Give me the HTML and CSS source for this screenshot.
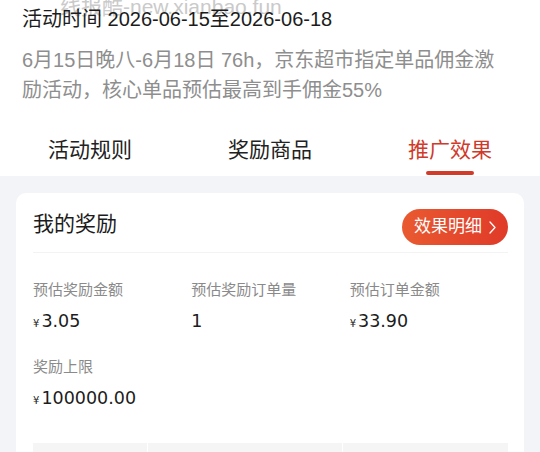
FILE: index.html
```html
<!DOCTYPE html>
<html lang="zh-CN">
<head>
<meta charset="utf-8">
<title>推广效果</title>
<link rel="stylesheet" href="styles.css">
</head>
<body>
<div class="top">
  <div class="watermark">线报酷-new.xianbao.fun</div>
  <div class="intro">
    <h1 class="title">活动时间 2026-06-15至2026-06-18</h1>
    <p class="desc">6月15日晚八-6月18日 76h，京东超市指定单品佣金激励活动，核心单品预估最高到手佣金55%</p>
  </div>
  <nav class="tabs">
    <div class="tab">活动规则</div>
    <div class="tab">奖励商品</div>
    <div class="tab active">推广效果</div>
  </nav>
</div>
<main class="content">
  <section class="card">
    <div class="card-head">
      <h2 class="card-title">我的奖励</h2>
      <button class="detail-btn">效果明细<svg class="chev" width="7" height="13" viewBox="0 0 7 13"><path d="M1 1l5 5.5L1 12" fill="none" stroke="#fff" stroke-width="1.3" stroke-linecap="round" stroke-linejoin="round"/></svg></button>
    </div>
    <div class="stats">
      <div class="stat">
        <div class="label">预估奖励金额</div>
        <div class="value"><span class="yen">¥</span>3.05</div>
      </div>
      <div class="stat">
        <div class="label">预估奖励订单量</div>
        <div class="value">1</div>
      </div>
      <div class="stat">
        <div class="label">预估订单金额</div>
        <div class="value"><span class="yen">¥</span>33.90</div>
      </div>
      <div class="stat">
        <div class="label">奖励上限</div>
        <div class="value"><span class="yen">¥</span>100000.00</div>
      </div>
    </div>
    <div class="table-head">
      <div class="th"></div>
      <div class="th"></div>
      <div class="th"></div>
    </div>
  </section>
</main>
</body>
</html>
```
FILE: styles.css
```css
* { box-sizing: border-box; }
html, body {
  margin: 0;
  padding: 0;
}
body {
  font-family: "Liberation Sans", "Noto Sans CJK SC", sans-serif;
  background: #f3f4f7;
  color: #1c1c1c;
  overflow: hidden;
}
.top {
  position: relative;
  background: #fff;
  padding-bottom: 1px;
}
.watermark {
  position: absolute;
  top: -4px;
  left: 60px;
  font-size: 21px;
  line-height: 21px;
  color: #cacaca;
  white-space: nowrap;
  z-index: 0;
}
.intro {
  position: relative;
  z-index: 1;
  padding: 5px 22px 0;
}
.title {
  margin: 0;
  font-size: 20px;
  line-height: 28px;
  font-weight: 400;
  color: #1c1c1c;
}
.desc {
  margin: 12px 0 0;
  max-width: 480px;
  font-size: 20px;
  line-height: 30px;
  color: #8e8e8e;
}
.tabs {
  display: grid;
  grid-template-columns: repeat(3, 1fr);
  margin-top: 30px;
}
.tab {
  display: flex;
  flex-direction: column;
  align-items: center;
  font-size: 21px;
  line-height: 30px;
  color: #222;
}
.tab::after {
  content: "";
  display: block;
  width: 48px;
  height: 4px;
  margin-top: 6px;
  border-radius: 2px;
  background: transparent;
}
.tab.active { color: #cf3a2a; }
.tab.active::after { background: #d23b2a; }
.content {
  padding: 17px 16px 0;
}
.card {
  background: #fff;
  border-radius: 10px;
  padding: 16px 16px 0 17px;
}
.card-head {
  display: flex;
  justify-content: space-between;
  align-items: flex-start;
  padding-bottom: 7px;
  border-bottom: 1px solid #f3f3f3;
}
.card-title {
  margin: 0;
  font-size: 21px;
  line-height: 30px;
  font-weight: 400;
  color: #1c1c1c;
}
.detail-btn {
  display: flex;
  align-items: center;
  gap: 7px;
  height: 36px;
  width: 106px;
  padding: 0 0 0 12px;
  border: 0;
  border-radius: 18px;
  background: linear-gradient(90deg, #e95a30, #e03a29);
  color: #fff;
  font-family: inherit;
  font-size: 17px;
  line-height: 36px;
}
.chev { display: block; }
.stats {
  display: grid;
  grid-template-columns: repeat(3, 1fr);
  row-gap: 20px;
  padding-top: 27px;
}
.label {
  font-size: 15px;
  line-height: 20px;
  color: #8a8a8a;
}
.value {
  margin-top: 8px;
  font-family: "DejaVu Sans", "Noto Sans CJK SC", sans-serif;
  font-size: 17.5px;
  line-height: 26px;
  color: #1c1c1c;
}
.yen {
  font-size: 10px;
  margin-right: 2px;
}
.table-head {
  display: grid;
  grid-template-columns: 114px 194px 1fr;
  column-gap: 1px;
  margin-top: 29px;
  height: 40px;
}
.th {
  background: #f5f5f6;
}
```
